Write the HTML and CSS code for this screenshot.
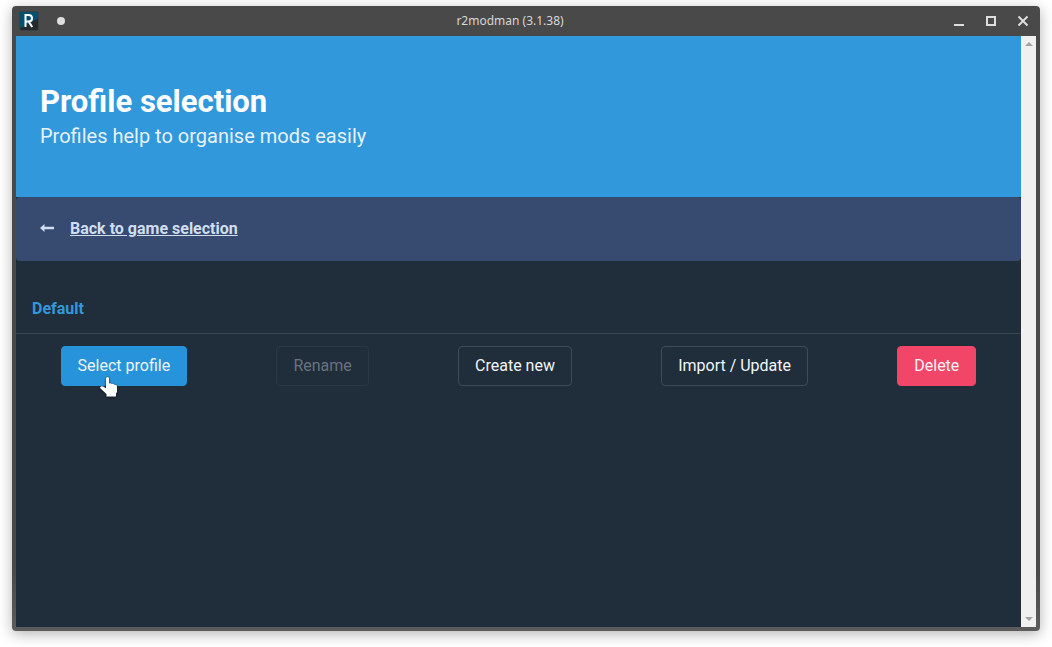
FILE: index.html
```
<!DOCTYPE html>
<html lang="en">
<head>
<meta charset="utf-8">
<meta name="viewport" content="width=device-width, initial-scale=1">
<title>r2modman (3.1.38)</title>
<link rel="stylesheet" href="styles.css">
</head>
<body>
<div class="window">
  <header class="titlebar">
    <div class="titlebar-side">
      <svg class="app-icon" width="20" height="20" viewBox="0 0 20 20" role="img" aria-label="R">
        <defs><clipPath id="tile"><rect x="1" y="1" width="18" height="18" rx="1"/></clipPath></defs>
        <rect width="20" height="20" rx="2" fill="#3b4145"/>
        <g clip-path="url(#tile)">
          <rect width="20" height="20" fill="#252a2d"/>
          <path d="M0 0H20V7L0 18Z" fill="#06506f"/>
        </g>
        <path d="M6.500 16V4H9.500Q13 4 13 7.300T9.500 10.600H6.500M9.800 10.600L13.200 16" fill="none" stroke="#fff" stroke-width="2"/>
      </svg>
      <button class="pin-button" type="button" aria-label="Pin window"></button>
    </div>
    <span class="titlebar-title">r2modman (3.1.38)</span>
    <div class="titlebar-side titlebar-controls">
      <button class="control" type="button" aria-label="Minimise">
        <svg width="12" height="12" viewBox="0 0 12 12"><path d="M1 10H11" stroke="#dedede" stroke-width="2"/></svg>
      </button>
      <button class="control" type="button" aria-label="Maximise">
        <svg width="12" height="12" viewBox="0 0 12 12"><path d="M2 2H10V10H2Z" fill="none" stroke="#dedede" stroke-width="2"/></svg>
      </button>
      <button class="control" type="button" aria-label="Close">
        <svg width="12" height="12" viewBox="0 0 12 12"><path d="M1.500 1.500L10.500 10.500M10.500 1.500L1.500 10.500" stroke="#dedede" stroke-width="2"/></svg>
      </button>
    </div>
  </header>
  <div class="viewport">
    <main class="page">
      <section class="hero">
        <h1 class="title">Profile selection</h1>
        <p class="subtitle">Profiles help to organise mods easily</p>
      </section>
      <nav class="notification">
        <svg width="14" height="10" viewBox="0 0 14 10" aria-hidden="true"><path d="M4.500 0L0 4L4.500 8V5.200H14V2.800H4.500Z" fill="#d0def0"/></svg>
        <a class="back-link" href="#games">Back to game selection</a>
      </nav>
      <section class="profiles">
        <h2 class="profile-name">Default</h2>
        <div class="actions">
          <div class="action">
            <button class="button button-info" type="button">Select profile</button>
            <svg class="pointer" width="20" height="22" viewBox="0 0 20 22" aria-hidden="true">
              <path d="M7 2.500Q7 1 8.500 1T10 2.500V7.500Q12 6.700 12.700 8Q14.500 7.500 15.300 8.800Q18 8.300 18 10.500V16L17 17.500V20.500H7.500V18L1.500 12.500Q0.500 11.500 1.800 10.600Q3.500 9.800 5 11L7 12.300Z" fill="#fff" stroke="#162129" stroke-opacity="0.450" stroke-width="1" paint-order="stroke"/>
            </svg>
          </div>
          <button class="button" type="button" disabled>Rename</button>
          <button class="button" type="button">Create new</button>
          <button class="button" type="button">Import / Update</button>
          <button class="button button-danger" type="button">Delete</button>
        </div>
      </section>
    </main>
    <div class="scrollbar">
      <button class="scroll-button" type="button" aria-label="Scroll up">
        <svg width="8" height="4" viewBox="0 0 8 4"><path d="M0 4L4 0L8 4Z" fill="#a3a3a3"/></svg>
      </button>
      <button class="scroll-button" type="button" aria-label="Scroll down">
        <svg width="8" height="4" viewBox="0 0 8 4"><path d="M0 0L4 4L8 0Z" fill="#a3a3a3"/></svg>
      </button>
    </div>
  </div>
</div>
</body>
</html>
```
FILE: styles.css
```
* {
  box-sizing: border-box;
}

body {
  display: flex;
  min-height: 100vh;
  margin: 0;
  padding: 6px 12px 16px;
  background: #fff;
  font-family: Roboto, "Liberation Sans", sans-serif;
  font-size: 16px;
  line-height: 24px;
}

button {
  margin: 0;
  padding: 0;
  border: 0;
  background: none;
  font: inherit;
}

.window {
  display: flex;
  flex: 1;
  flex-direction: column;
  padding: 0 4px 4px;
  border-radius: 4px;
  background: linear-gradient(#494949 90%, #5c5c5c);
  box-shadow: 0 3px 14px rgba(0, 0, 0, 0.3);
}

.titlebar {
  display: flex;
  align-items: center;
  height: 30px;
  padding: 0 3px;
}

.titlebar-side {
  display: flex;
  flex: 1;
  align-items: center;
  gap: 18px;
}

.titlebar-controls {
  justify-content: flex-end;
  gap: 20px;
  padding-right: 4px;
}

.titlebar-title {
  padding-right: 28px;
  color: #d6d6d6;
  font-family: "Noto Sans", sans-serif;
  font-size: 12px;
  line-height: 18px;
}

.app-icon,
.control svg {
  display: block;
}

.pin-button {
  width: 8px;
  height: 8px;
  border-radius: 50%;
  background: #dedede;
}

.viewport {
  display: flex;
  flex: 1;
}

.page {
  flex: 1;
  background: #202d3a;
}

.hero {
  display: flex;
  flex-direction: column;
  gap: 4px;
  padding: 48px 24px;
  background: #3298dc;
}

.title {
  margin: 0;
  color: #fff;
  font-size: 31px;
  font-weight: 700;
  line-height: 36px;
}

.subtitle {
  margin: 0;
  color: rgba(255, 255, 255, 0.9);
  font-size: 20px;
  line-height: 25px;
}

.notification {
  display: flex;
  align-items: center;
  gap: 16px;
  padding: 20px 24px;
  border-radius: 4px;
  background: #374a70;
}

.back-link {
  color: #d0def0;
  font-weight: 700;
  text-decoration: underline;
}

.profiles {
  padding-top: 36px;
}

.profile-name {
  margin: 0;
  padding: 0 16px 12px;
  border-bottom: 1px solid #3a4652;
  color: #3298dc;
  font-size: 16px;
  font-weight: 700;
}

.actions {
  display: flex;
  flex-wrap: wrap;
  justify-content: space-around;
  padding-top: 12px;
}

.action {
  position: relative;
}

.button {
  height: 40px;
  padding: 0 16px;
  border: 1px solid #3f4b57;
  border-radius: 4px;
  color: #f1f5f9;
  white-space: nowrap;
}

.button:disabled {
  border-color: #2b3844;
  color: #69737d;
}

.button-info {
  border-color: #2793da;
  background: #2793da;
}

.button-danger {
  border-color: #f14668;
  background: #f14668;
}

.pointer {
  position: absolute;
  top: 30px;
  left: 38px;
  filter: drop-shadow(0 1px 1px rgba(0, 0, 0, 0.4));
}

.scrollbar {
  display: flex;
  flex-direction: column;
  justify-content: space-between;
  width: 15px;
  background: #f0f0f0;
}

.scroll-button {
  display: flex;
  align-items: center;
  justify-content: center;
  height: 16px;
}
```
